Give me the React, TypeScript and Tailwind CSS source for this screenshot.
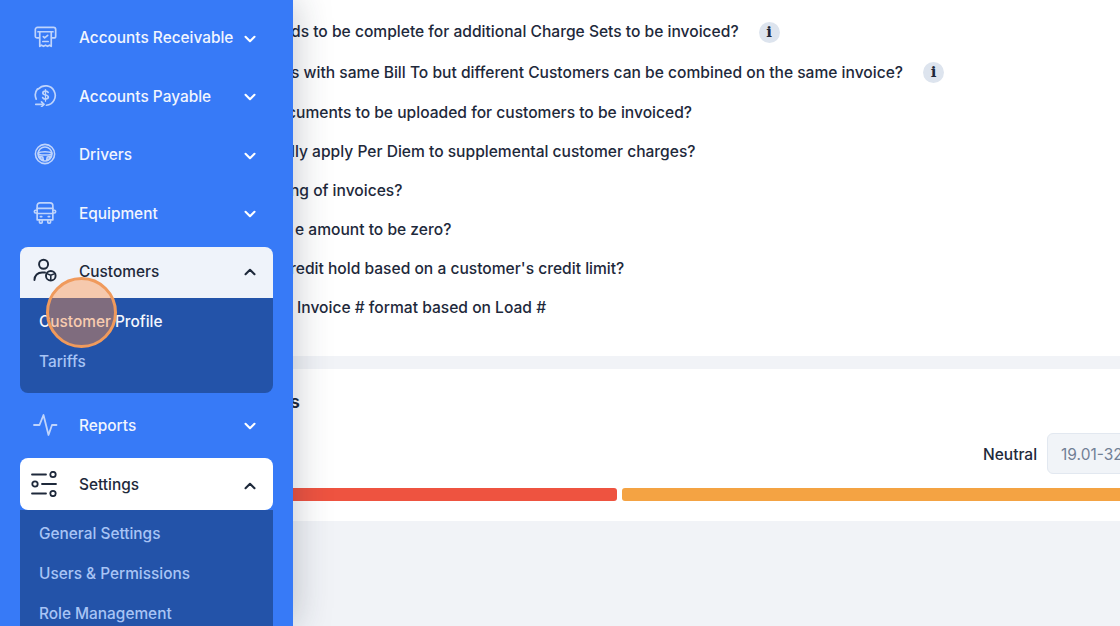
import React from "react";
import { ChevronDown, ChevronUp } from "lucide-react";

function ReceivableIcon() {
  return (
    <svg width="23" height="23" viewBox="0 0 26 26" fill="none" stroke="currentColor" strokeWidth="1.900" strokeLinecap="round" strokeLinejoin="round">
      <path d="M6 13.500H3.500a2 2 0 0 1-2-2V4a2.500 2.500 0 0 1 2.500-2.500h18a2.500 2.500 0 0 1 2.500 2.500v7.500a2 2 0 0 1-2 2H20" />
      <path d="M4.500 6.500h17" />
      <path d="M6.500 6.500V23l2-1.300 2.200 1.300 2.300-1.300 2.300 1.300 2.200-1.300 2 1.300V6.500" />
      <path d="m10.500 12 1.500 1.500 3.500-3" />
      <path d="M10 17.500h6" />
    </svg>
  );
}

function PayableIcon() {
  return (
    <svg width="23" height="23" viewBox="0 0 26 26" fill="none" stroke="currentColor" strokeWidth="1.900" strokeLinecap="round" strokeLinejoin="round">
      <path d="M14 24a11 11 0 1 0-9-18.500" />
      <path d="M4 5.500A11 11 0 0 0 2.500 17" />
      <path d="M16 9.500c-.5-1-1.500-1.500-3-1.500-1.700 0-3 .8-3 2.200 0 3 6.200 1.600 6.200 4.600 0 1.400-1.400 2.200-3.200 2.200-1.500 0-2.700-.6-3.200-1.700" />
      <path d="M13 6.300v13.200" strokeWidth="1.400" />
      <path d="M2 23h9" />
      <path d="m8.500 20.300 2.700 2.700-2.700 2.700" />
    </svg>
  );
}

function WheelIcon() {
  return (
    <svg width="22" height="22" viewBox="0 0 24 24" fill="none" stroke="currentColor" strokeWidth="1.700" strokeLinecap="round" strokeLinejoin="round">
      <circle cx="12" cy="12" r="10.500" />
      <circle cx="12" cy="12" r="7.600" />
      <path d="M4.500 11c2.500-2 12.500-2 15 0-.2 1.500-2.500 2-4 2h-7c-1.500 0-3.800-.5-4-2Z" />
      <path d="m5.500 14.500 4 .8 .8 3.700c-2.200-.5-4-2.300-4.800-4.500Z" />
      <path d="m18.500 14.500-4 .8-.8 3.700c2.200-.5 4-2.300 4.800-4.500Z" />
    </svg>
  );
}

function TruckIcon() {
  return (
    <svg width="24" height="24" viewBox="0 0 26 26" fill="none" stroke="currentColor" strokeWidth="1.800" strokeLinecap="round" strokeLinejoin="round">
      <path d="M4.500 5a3 3 0 0 1 3-3h11a3 3 0 0 1 3 3v15.500h-17Z" />
      <path d="M4.500 8h17" />
      <path d="M4.500 13.500h17" />
      <path d="M4.500 10H2.800a1.300 1.300 0 0 0-1.300 1.300v.4A1.300 1.300 0 0 0 2.800 13h1.700" />
      <path d="M21.500 10h1.700a1.300 1.300 0 0 1 1.300 1.300v.4a1.300 1.300 0 0 1-1.300 1.300h-1.700" />
      <path d="M7 20.500v2.500a1 1 0 0 0 1 1h1a1 1 0 0 0 1-1v-2.500" />
      <path d="M16 20.500v2.500a1 1 0 0 0 1 1h1a1 1 0 0 0 1-1v-2.500" />
      <path d="M8 17h1.500M16.500 17H18" />
    </svg>
  );
}

function CustomerIcon() {
  return (
    <svg width="25" height="25" viewBox="0 0 26 26" fill="none" stroke="currentColor" strokeWidth="2" strokeLinecap="round" strokeLinejoin="round">
      <circle cx="11" cy="6.500" r="4.700" />
      <path d="M1.500 23c0-4.800 3.500-8 8-8h3" />
      <circle cx="18.500" cy="18.500" r="5" />
      <path d="M15 16.500 18.500 18l3.500-1.500M18.500 18v5" strokeWidth="1.600" />
    </svg>
  );
}

function PulseIcon() {
  return (
    <svg width="26" height="26" viewBox="0 0 26 26" fill="none" stroke="currentColor" strokeWidth="1.800" strokeLinecap="round" strokeLinejoin="round">
      <path d="M2 13h5.500L11.500 3l5 20 3.500-10h4.500" />
    </svg>
  );
}

function SlidersIcon() {
  return (
    <svg width="28" height="26" viewBox="0 0 28 26" fill="none" stroke="currentColor" strokeWidth="1.800" strokeLinecap="round">
      <path d="M1 3.500h14" />
      <circle cx="22" cy="3.500" r="2.700" />
      <circle cx="4" cy="13" r="2.700" />
      <path d="M11 13h14" />
      <path d="M1 22.500h14" />
      <circle cx="22" cy="22.500" r="2.700" />
    </svg>
  );
}

function NavRow({ icon, label }: { icon: React.ReactNode; label: string }) {
  return (
    <div className="mx-5 flex h-[52px] items-center text-[#f1f5fe]">
      <div className="flex w-[59px] justify-center pr-[9px] text-[#bfd4fc]">{icon}</div>
      <span className="flex-1 pt-[2px] text-[15.400px] font-medium">{label}</span>
      <ChevronDown size={18} strokeWidth={2.800} className="mr-[14px] mt-[3px] text-white" />
    </div>
  );
}

function OpenHeader({ icon, label, className }: { icon: React.ReactNode; label: string; className: string }) {
  return (
    <div className={className}>
      <div className="flex w-[59px] justify-center pr-[9px]">{icon}</div>
      <span className="flex-1 pt-[2px] text-[15.400px] font-medium">{label}</span>
      <ChevronUp size={18} strokeWidth={2.800} className="mr-[14px] mt-[3px]" />
    </div>
  );
}

function Sidebar() {
  return (
    <aside className="relative z-10 h-[626px] w-[293px] shrink-0 overflow-hidden bg-[#377af7] pt-[11px] shadow-[0_0_36px_rgba(30,41,59,0.28)]">
      <div className="flex flex-col gap-[6.500px]">
        <NavRow icon={<ReceivableIcon />} label="Accounts Receivable" />
        <NavRow icon={<PayableIcon />} label="Accounts Payable" />
        <NavRow icon={<WheelIcon />} label="Drivers" />
        <NavRow icon={<TruckIcon />} label="Equipment" />
      </div>

      <div className="mx-5 mt-2">
        <OpenHeader
          icon={<CustomerIcon />}
          label="Customers"
          className="flex h-[51px] items-center rounded-t-lg bg-[#eff3fa] pb-[3px] text-[#1e293b]"
        />
        <div className="h-[95px] rounded-b-lg bg-[#2353a9] pl-[19px] pt-[12px] text-[15.400px]">
          <div className="flex h-6 items-center font-medium text-[#f4f7fd]">Customer Profile</div>
          <div className="mt-4 flex h-6 items-center font-medium text-[#a8c4f5]">Tariffs</div>
        </div>
      </div>

      <div className="mt-1.5">
        <NavRow icon={<PulseIcon />} label="Reports" />
      </div>

      <div className="mx-5 mt-[7.500px]">
        <OpenHeader
          icon={<SlidersIcon />}
          label="Settings"
          className="flex h-[52px] items-center rounded-t-lg rounded-b-lg bg-white text-[#1e293b]"
        />
        <div className="bg-[#2353a9] pb-10 pl-[19px] pt-[12px] text-[15.400px] font-medium text-[#a8c4f5]">
          <div className="flex h-6 items-center">General Settings</div>
          <div className="mt-4 flex h-6 items-center">Users &amp; Permissions</div>
          <div className="mt-4 flex h-6 items-center">Role Management</div>
        </div>
      </div>

      {/* click marker from the recording */}
      <div className="absolute left-[46px] top-[277px] h-[71px] w-[71px] rounded-full border-[3px] border-[#f09a5c] bg-[rgba(255,143,67,0.42)]" />
    </aside>
  );
}

function InfoBadge({ className }: { className?: string }) {
  return (
    <span className={`ml-5 flex h-[21px] w-[21px] shrink-0 items-center justify-center rounded-full bg-[#dde4ee] font-['DejaVu_Serif',serif] text-[15px] font-bold leading-none text-[#1e293b] ${className ?? ""}`}>
      i
    </span>
  );
}

function Main() {
  return (
    <main className="flex h-[626px] min-w-0 flex-1 flex-col overflow-hidden bg-[#f1f3f7]">
      <div className="h-[356px] shrink-0 bg-white pt-[12px] text-[15.600px] font-medium text-[#1e293b]">
        <div className="flex h-10 items-center whitespace-nowrap -ml-[2px]">
          ds to be complete for additional Charge Sets to be invoiced?
          <InfoBadge />
        </div>
        <div className="mt-px flex h-10 items-center whitespace-nowrap -ml-[2px]">
          s with same Bill To but different Customers can be combined on the same invoice?
          <InfoBadge className="-mt-[2px]" />
        </div>
        <div className="flex h-[39px] items-center whitespace-nowrap -ml-[6px]">cuments to be uploaded for customers to be invoiced?</div>
        <div className="flex h-[39px] items-center whitespace-nowrap -ml-[2px]">lly apply Per Diem to supplemental customer charges?</div>
        <div className="flex h-[39px] items-center whitespace-nowrap -ml-[7px]">ing of invoices?</div>
        <div className="flex h-[39px] items-center whitespace-nowrap ml-[2px]">e amount to be zero?</div>
        <div className="flex h-[39px] items-center whitespace-nowrap -ml-[3px]">redit hold based on a customer's credit limit?</div>
        <div className="flex h-[39px] items-center whitespace-nowrap pl-1">Invoice # format based on Load #</div>
      </div>

      <div className="mt-[13px] h-[152px] shrink-0 bg-white">
        <div className="-ml-[3px] pt-[21px] text-lg font-semibold leading-6 text-[#1e293b]">s</div>
        <div className="mt-[19px] flex items-center gap-2.5 pl-[690px]">
          <span className="pt-[2px] text-[15.500px] font-medium text-[#1e293b]">Neutral</span>
          <div className="flex h-[41px] w-[130px] shrink-0 items-center rounded-md border border-[#e2e8f0] bg-[#f1f4f8] pl-[13px] pt-[2px] text-[15.500px] text-[#718096]">
            19.01-32
          </div>
        </div>
        <div className="mt-[14px] flex gap-[5px]">
          <div className="h-[13px] w-[324px] shrink-0 rounded-r-[3px] bg-[#ee5340]" />
          <div className="h-[13px] w-[600px] shrink-0 rounded-l-[3px] bg-[#f4a343]" />
        </div>
      </div>
    </main>
  );
}

export default function App() {
  return (
    <div className="flex h-[626px] w-[1120px] overflow-hidden font-['Inter',sans-serif]">
      <Sidebar />
      <Main />
    </div>
  );
}
